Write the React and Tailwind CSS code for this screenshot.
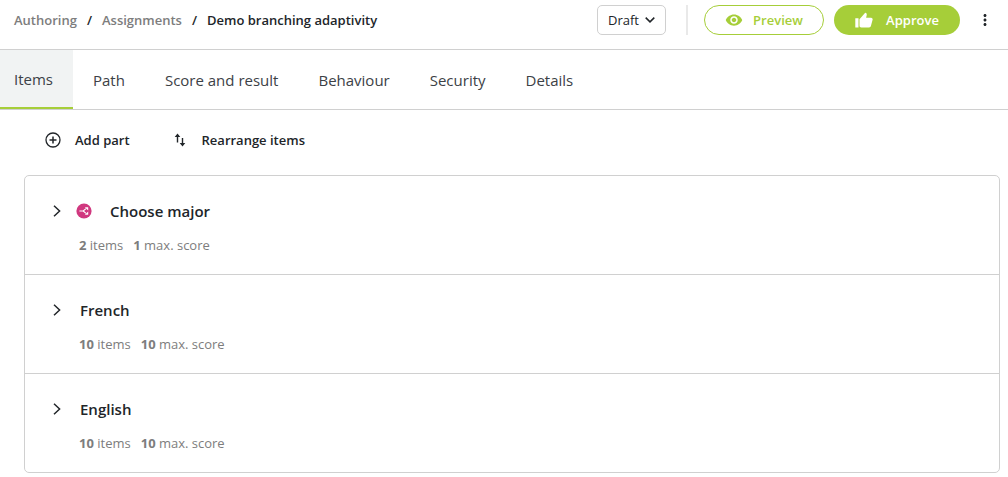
import { useState } from "react";
import { MdVisibility, MdMoreVert } from "react-icons/md";

const tabs = ["Path", "Score and result", "Behaviour", "Security", "Details"];

const parts = [
  { title: "Choose major", items: 2, score: 1, branching: true },
  { title: "French", items: 10, score: 10 },
  { title: "English", items: 10, score: 10 },
];

function PlusCircle() {
  return (
    <svg className="size-4" viewBox="0 0 16 16" fill="none" stroke="currentColor" strokeWidth="1.3" aria-hidden="true">
      <circle cx="8" cy="8" r="7" />
      <path d="M8 4.5v7M4.5 8h7" strokeWidth="1.5" />
    </svg>
  );
}

function SwapArrows() {
  return (
    <svg className="h-4 w-3" viewBox="0 0 12 16" fill="none" stroke="currentColor" strokeWidth="1.4" aria-hidden="true">
      <path d="M3.5 10.5V3M8.5 6v7" />
      <path d="M3.5 1.4 .7 5h5.6zM8.5 14.6 5.7 11h5.6z" fill="currentColor" stroke="none" />
    </svg>
  );
}

function ThumbUp() {
  return (
    <svg className="size-4.5" viewBox="0 0 18 18" fill="currentColor" aria-hidden="true">
      <path d="M.3 7.200h3.200v9.300H.3zM4.500 8.200 10.200 1.800c1.300.3 1.800 1.200 1.500 2.400L11.100 6.700h4.900c1.200 0 1.900 1 1.600 2.100l-1.700 6.300c-.2.900-.9 1.400-1.800 1.400H6.300c-1 0-1.800-.7-1.800-1.700z" />
    </svg>
  );
}

function Chevron({ className, d, viewBox }) {
  return (
    <svg className={className} viewBox={viewBox} fill="none" stroke="currentColor" strokeWidth="1.5" aria-hidden="true">
      <path d={d} />
    </svg>
  );
}

function BranchBadge() {
  return (
    <svg className="size-4" viewBox="0 0 16 16" aria-hidden="true">
      <circle cx="8" cy="8" r="7.6" fill="#d0387f" />
      <path d="M3.4 8h3.8L10 5.6M7.2 8l2.800 2.400" fill="none" stroke="#fff" strokeWidth="1.1" />
      <path d="M8.8 4.2h3.4v3.4zM8.8 11.8h3.4V8.400z" fill="#fff" />
    </svg>
  );
}

function Part({ part }) {
  const [open, setOpen] = useState(false);
  return (
    <li className="flex border-b border-[#d0d0d0] pt-5.75 pb-4.75 pl-7 last:border-b-0">
      <div>
        <button
          type="button"
          aria-expanded={open}
          onClick={() => setOpen(!open)}
          className="flex h-6 items-center text-[15px] font-semibold"
        >
          <Chevron className="h-3 w-2" viewBox="0 0 8 12" d="M1 .8 6.6 6 1 11.2" />
          {part.branching ? (
            <span className="mr-4.5 ml-3.75">
              <BranchBadge />
            </span>
          ) : (
            <span className="w-4.75" />
          )}
          {part.title}
        </button>
        <p className="mt-3 ml-6.5 flex h-5 gap-2.5 text-[13px] leading-5 text-[#7d7d7d]">
          <span><b>{part.items}</b> items</span>
          <span><b>{part.score}</b> max. score</span>
        </p>
      </div>
    </li>
  );
}

export default function App() {
  return (
    <div className="bg-white font-['Open_Sans',sans-serif] text-[#212529]">
      <header className="flex items-center justify-between border-b border-[#d0d0d0] pt-1.25 pr-3.5 pb-3.5 pl-3.5">
        <nav aria-label="Breadcrumb">
          <ol className="flex gap-2.5 text-[13px] leading-5 font-semibold">
            <li><a href="#authoring" className="text-[#7d7d7d]">Authoring</a></li>
            <li aria-hidden="true">/</li>
            <li><a href="#assignments" className="text-[#7d7d7d]">Assignments</a></li>
            <li aria-hidden="true">/</li>
            <li aria-current="page">Demo branching adaptivity</li>
          </ol>
        </nav>
        <div className="flex items-center">
          <div className="relative">
            <select
              aria-label="Status"
              defaultValue="Draft"
              className="h-7.5 w-17.25 appearance-none rounded-[5px] border border-[#d0d0d0] bg-white pl-2.5 text-[13px] leading-5"
            >
              <option>Draft</option>
            </select>
            <Chevron
              className="pointer-events-none absolute top-3 right-2.75 h-1.5 w-2.5"
              viewBox="0 0 10 6"
              d="M.7.6 5 4.9 9.3.6"
            />
          </div>
          <div className="ml-5 h-7.5 w-0.5 bg-[#e9e9e9]" />
          <button
            type="button"
            className="ml-4 flex h-7.5 w-30 items-center justify-center gap-2.5 rounded-full border border-[#a6ce39] text-[13px] leading-5 font-semibold text-[#a6ce39]"
          >
            <MdVisibility className="size-4.5" />
            Preview
          </button>
          <button
            type="button"
            className="ml-2.5 flex h-7.5 w-31.5 items-center justify-center gap-3.25 rounded-full bg-[#a6ce39] text-[13px] leading-5 font-semibold text-white"
          >
            <ThumbUp />
            Approve
          </button>
          <button type="button" aria-label="More actions" className="ml-4">
            <MdMoreVert className="size-4.5" />
          </button>
        </div>
      </header>

      <nav aria-label="Sections" className="flex border-b border-[#d0d0d0] text-[15px] leading-5 text-[#3c4146]">
        <a href="#items" aria-current="page" className="border-b-2 border-[#a6ce39] bg-[#f1f3f3] pt-4.75 pr-5 pb-4.5 pl-3.5">
          Items
        </a>
        {tabs.map((tab) => (
          <a key={tab} href="#tab" className="px-5 pt-5 pb-4.75">{tab}</a>
        ))}
      </nav>

      <main>
        <div className="flex items-center gap-11 px-11.25 pt-5 pb-6.25 text-[13px] leading-5 font-semibold">
          <button type="button" className="flex items-center gap-3.5">
            <PlusCircle />
            Add part
          </button>
          <button type="button" className="flex items-center gap-4">
            <SwapArrows />
            Rearrange items
          </button>
        </div>
        <ul className="mr-2 ml-6 rounded-[5px] border border-[#d0d0d0]">
          {parts.map((part) => (
            <Part key={part.title} part={part} />
          ))}
        </ul>
      </main>
    </div>
  );
}
